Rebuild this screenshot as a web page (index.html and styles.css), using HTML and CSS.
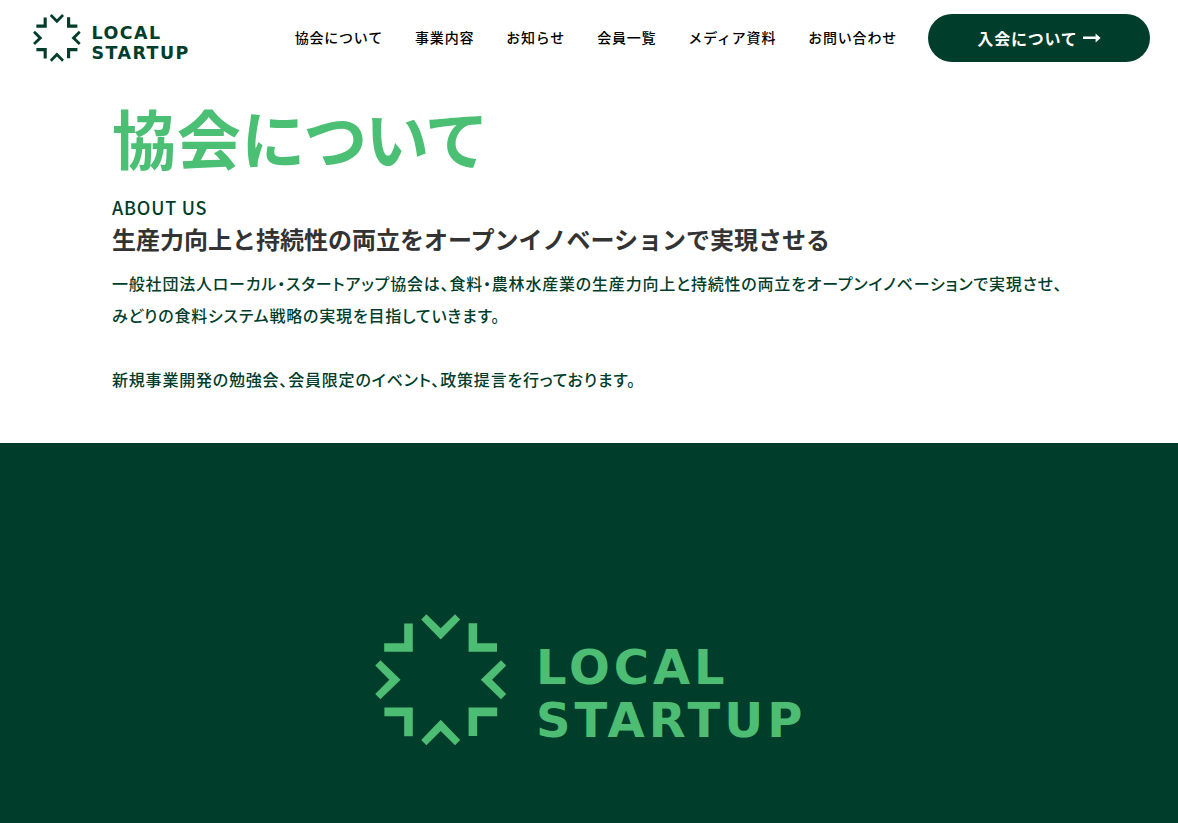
FILE: index.html
```html
<!DOCTYPE html>
<html lang="ja">
<head>
<meta charset="utf-8">
<meta name="viewport" content="width=device-width, initial-scale=1">
<title>協会について | LOCAL STARTUP</title>
<link rel="stylesheet" href="styles.css">
</head>
<body>
<svg class="defs" aria-hidden="true">
  <defs>
    <g id="mark-quarter">
      <path d="M46.2 5.4 51.4.2 65.7 14.3 80 .2 85.2 5.4 65.7 25.6Z"/>
      <path d="M29.2 9.4H37.8V37.8H9.2V29.2H29.2Z"/>
    </g>
    <g id="mark">
      <use href="#mark-quarter"/>
      <use href="#mark-quarter" transform="rotate(90 65.7 65.7)"/>
      <use href="#mark-quarter" transform="rotate(180 65.7 65.7)"/>
      <use href="#mark-quarter" transform="rotate(270 65.7 65.7)"/>
    </g>
  </defs>
</svg>

<header class="header">
  <a class="brand" href="#" aria-label="LOCAL STARTUP">
    <svg class="logo logo-small" viewBox="0 0 440 132">
      <use href="#mark"/>
      <text class="wordmark" x="161" y="70">LOCAL</text>
      <text class="wordmark" x="161" y="123">STARTUP</text>
    </svg>
  </a>
  <nav class="nav">
    <a href="#">協会について</a>
    <a href="#">事業内容</a>
    <a href="#">お知らせ</a>
    <a href="#">会員一覧</a>
    <a href="#">メディア資料</a>
    <a href="#">お問い合わせ</a>
  </nav>
  <a class="join" href="#">入会について
    <svg class="arrow" viewBox="0 0 18 10" aria-hidden="true"><path d="M0 3.5H12.6V.6L17.6 5 12.6 9.4V6.1H0Z"/></svg>
  </a>
</header>

<main class="main">
  <section class="about">
    <h1 class="title">協会について</h1>
    <p class="label">ABOUT US</p>
    <h2 class="lead">生産力向上と持続性の両立をオープンイノベーションで実現させる</h2>
    <p class="text">一般社団法人ローカル・スタートアップ協会は、食料・農林水産業の生産力向上と持続性の両立をオープンイノベーションで実現させ、<br>みどりの食料システム戦略の実現を目指していきます。</p>
    <p class="text">新規事業開発の勉強会、会員限定のイベント、政策提言を行っております。</p>
  </section>
  <section class="visual">
    <svg class="logo logo-large" viewBox="-6 0 440 132" role="img" aria-label="LOCAL STARTUP">
      <use href="#mark"/>
      <text class="wordmark" x="161" y="70">LOCAL</text>
      <text class="wordmark" x="161" y="123">STARTUP</text>
    </svg>
  </section>
</main>
</body>
</html>
```

FILE: styles.css
```css
:root {
  --deep: #003d2b;
  --leaf: #4bbf73;
}

* {
  box-sizing: border-box;
}

body {
  margin: 0;
  min-height: 100vh;
  display: flex;
  flex-direction: column;
  background: #fff;
  color: var(--deep);
  font-family: "Noto Sans CJK JP", sans-serif;
  font-size: 16px;
  font-weight: 500;
  letter-spacing: 0.05em;
  font-feature-settings: "palt";
}

h1,
h2,
p {
  margin: 0;
}

a {
  color: inherit;
  text-decoration: none;
}

.defs {
  display: none;
}

.header {
  display: flex;
  align-items: center;
  padding: 14px 28px 14px 33px;
}

.brand {
  display: flex;
  margin-right: auto;
}

.logo {
  display: block;
  overflow: visible;
}

.logo-small {
  width: 160px;
  fill: var(--deep);
}

.logo-large {
  width: 440px;
  max-width: 90%;
  fill: #4dbd74;
}

.wordmark {
  font-family: "DejaVu Sans", sans-serif;
  font-size: 48px;
  font-weight: 700;
  letter-spacing: 4px;
}

.nav {
  display: flex;
  gap: 32px;
  margin: 0 31px 2px 0;
  color: #000;
  font-size: 14px;
  line-height: 24px;
  font-feature-settings: normal;
  white-space: nowrap;
}

.join {
  display: flex;
  align-items: center;
  justify-content: center;
  gap: 5px;
  width: 222px;
  height: 48px;
  border-radius: 24px;
  background: var(--deep);
  color: #fff;
  font-weight: 700;
  font-feature-settings: normal;
  white-space: nowrap;
}

.arrow {
  width: 18px;
  height: 10px;
  fill: currentColor;
}

.main {
  flex: 1;
  display: flex;
  flex-direction: column;
}

.about {
  padding: 12px 112px 48px;
}

.title {
  color: var(--leaf);
  font-size: 64px;
  font-weight: 700;
  line-height: 96px;
}

.label {
  margin-top: 10px;
  font-size: 18px;
  line-height: 27px;
}

.lead {
  color: #333;
  font-size: 24px;
  font-weight: 700;
  line-height: 36px;
  letter-spacing: 0;
  font-feature-settings: normal;
}

.text {
  margin-top: 10px;
  line-height: 32px;
}

.text + .text {
  margin-top: 32px;
}

.visual {
  flex: 1;
  display: flex;
  align-items: flex-start;
  justify-content: center;
  padding: 171px 0 48px;
  background: var(--deep);
}
```
